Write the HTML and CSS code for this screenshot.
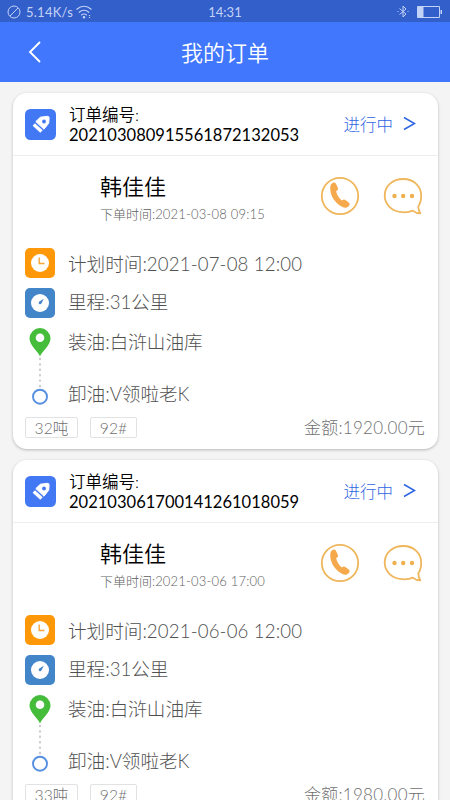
FILE: index.html
```html
<!DOCTYPE html>
<html lang="zh-CN">
<head>
<meta charset="utf-8">
<title>我的订单</title>
<link rel="stylesheet" href="styles.css">
</head>
<body>
<svg class="defs" aria-hidden="true">
  <symbol id="tag" viewBox="0 0 31 31">
    <rect width="31" height="31" rx="5.5" fill="#4278f4"/>
    <path d="M10.8 12.6 15.4 8.2 22.6 7.3Q24.1 7.300 24.1 8.900L23.7 14.2 19 20.2Z" fill="#fff" stroke="#fff" stroke-linejoin="round"/>
    <path d="M8.800 15.400 16.500 22.600" stroke="#fff" stroke-width="3.400"/>
    <circle cx="19" cy="12.500" r="1.900" fill="#4278f4"/>
  </symbol>
  <symbol id="phone" viewBox="0 0 40 40">
    <circle cx="20" cy="20" r="18.2" fill="none" stroke="#efb65c" stroke-width="1.8"/>
    <path d="M12.4 7c1.6-1.1 3-.5 3.8 1.2l1.6 3.6c.7 1.6 0 2.4-1.7 3.3.7 3.7 2.8 7 5.7 9.5 1.6-1.3 2.5-1.4 3.9-.4l3 2.2c1.3 1 1.2 2.2.1 3.6-1.3 1.7-3.7 2.2-5.8 1.3-7.5-3.4-12.7-11-12.8-19 0-2.300.600-4.200 2.200-5.300Z" fill="#f6a84c"/>
  </symbol>
  <symbol id="chat" viewBox="0 0 40 40">
    <path d="M29.8 34.6C26 36.3 22.8 36.5 19.5 36.2 9 35.8 1.7 28.6 1.7 19.6 1.7 9.9 9.8 3 20.3 3S38.2 10.3 38.2 19.6c0 4.800-.5 7.600-2.900 10.600.1 3 .6 5.300 2.100 7.200-3 .1-5.300-.8-7.600-2.800Z" fill="none" stroke="#efb65c" stroke-width="1.8" stroke-linejoin="round"/>
    <g fill="#efb050"><circle cx="11.5" cy="20" r="2.2"/><circle cx="20.2" cy="20" r="2.2"/><circle cx="29" cy="20" r="2.2"/></g>
  </symbol>
  <symbol id="clock" viewBox="0 0 30 30">
    <rect width="30" height="30" rx="5" fill="#ff9808"/>
    <circle cx="15" cy="15" r="9" fill="#fff"/>
    <path d="M14.2 9.5V15.5H19.5" fill="none" stroke="#f8a537" stroke-width="1.4"/>
  </symbol>
  <symbol id="gauge" viewBox="0 0 30 30">
    <rect width="30" height="30" rx="5" fill="#4285c9"/>
    <circle cx="15" cy="15" r="9" fill="#fff"/>
    <path d="M18.8 10.8 16.4 15.6A1.5 1.5 0 0 1 14 13.8Z" fill="#4285c9"/>
  </symbol>
  <symbol id="route" viewBox="0 0 30 84">
    <path d="M15 28.5C13.2 23.8 4.5 17.6 4.5 10.6a10.5 10.5 0 0 1 21 0C25.5 17.6 16.8 23.8 15 28.5Z" fill="#45bd3b"/>
    <circle cx="15" cy="9.8" r="4.3" fill="#fff"/>
    <path d="M15 31V60" stroke="#ccc" stroke-width="2.4" stroke-linecap="round" stroke-dasharray="0 5.4"/>
    <circle cx="15" cy="68.7" r="7" fill="#fff" stroke="#578fe0" stroke-width="1.9"/>
  </symbol>
</svg>

<div class="status">
  <div class="status-left">
    <svg width="14" height="14" viewBox="0 0 14 14" fill="none" stroke="currentColor"><circle cx="7" cy="7" r="6"/><path d="M3 11 11 3"/></svg>
    <span>5.14K/s</span>
    <svg width="16" height="14" viewBox="0 0 16 14" fill="none" stroke="currentColor" stroke-width="1.2"><path d="M.5 4.500Q8-2 15.500 4.500M2.800 7.500Q8 3 13.200 7.500M5.200 10.200Q8 7.800 10.800 10.200"/><circle cx="8" cy="12.200" r=".7" fill="currentColor"/><path d="M13.500 10v3" stroke-dasharray="1 1"/></svg>
  </div>
  <time>14:31</time>
  <div class="status-right">
    <svg width="12" height="13" viewBox="0 0 12 13" fill="none" stroke="currentColor"><path d="M2.500 3.500 9 9 6 12V1L9 4 2.500 9.500M.5 6.500h1M10.500 6.500h1"/></svg>
    <svg width="26" height="12" viewBox="0 0 26 12"><path d="M.5.500H22.500V11.500H.5Z" fill="none" stroke="currentColor"/><path d="M1 1H6.500V11H1ZM23.500 4H25V8H23.500Z" fill="currentColor"/></svg>
  </div>
</div>
<header class="nav">
  <svg class="back" width="14" height="22" viewBox="0 0 14 22" fill="none" stroke="#fff" stroke-width="1.900"><path d="M12 1 2 11 12 21"/></svg>
  <h1>我的订单</h1>
</header>

<main class="orders">
  <article class="card">
    <div class="card-head">
      <svg class="tag-icon"><use href="#tag"/></svg>
      <div class="order-no">订单编号:<br><span class="number">202103080915561872132053</span></div>
      <div class="state">进行中<svg width="13" height="15" viewBox="0 0 13 15" fill="none" stroke="currentColor" stroke-width="1.600"><path d="M1 1.500 11.500 7.500 1 13.500"/></svg></div>
    </div>
    <div class="person">
      <div class="who"><h2>韩佳佳</h2><p>下单时间:<span class="placed">2021-03-08 09:15</span></p></div>
      <svg class="round"><use href="#phone"/></svg>
      <svg class="round"><use href="#chat"/></svg>
    </div>
    <div class="line"><svg class="mini"><use href="#clock"/></svg><p>计划时间:<span class="date">2021-07-08 12:00</span></p></div>
    <div class="line mileage"><svg class="mini"><use href="#gauge"/></svg><p>里程:31公里</p></div>
    <div class="route">
      <svg class="track"><use href="#route"/></svg>
      <div class="stops"><p>装油:白浒山油库</p><p>卸油:V领啦老K</p></div>
    </div>
    <div class="foot"><span class="chip">32吨</span><span class="chip small">92#</span><span class="amount">金额:1920.00元</span></div>
  </article>

  <article class="card">
    <div class="card-head">
      <svg class="tag-icon"><use href="#tag"/></svg>
      <div class="order-no">订单编号:<br><span class="number">202103061700141261018059</span></div>
      <div class="state">进行中<svg width="13" height="15" viewBox="0 0 13 15" fill="none" stroke="currentColor" stroke-width="1.600"><path d="M1 1.500 11.500 7.500 1 13.500"/></svg></div>
    </div>
    <div class="person">
      <div class="who"><h2>韩佳佳</h2><p>下单时间:<span class="placed">2021-03-06 17:00</span></p></div>
      <svg class="round"><use href="#phone"/></svg>
      <svg class="round"><use href="#chat"/></svg>
    </div>
    <div class="line"><svg class="mini"><use href="#clock"/></svg><p>计划时间:<span class="date">2021-06-06 12:00</span></p></div>
    <div class="line mileage"><svg class="mini"><use href="#gauge"/></svg><p>里程:31公里</p></div>
    <div class="route">
      <svg class="track"><use href="#route"/></svg>
      <div class="stops"><p>装油:白浒山油库</p><p>卸油:V领啦老K</p></div>
    </div>
    <div class="foot"><span class="chip">33吨</span><span class="chip small">92#</span><span class="amount">金额:1980.00元</span></div>
  </article>
</main>
</body>
</html>
```
FILE: styles.css
```css
* { box-sizing: border-box; margin: 0; padding: 0; }
body {
  height: 800px;
  overflow: hidden;
  display: flex;
  flex-direction: column;
  background: #f4f4f5;
  font-family: Lato, "Noto Sans CJK SC", sans-serif;
  font-weight: 300;
  color: #505050;
}
svg { display: block; flex: none; }
p, h1, h2, .chip, .amount, .state, .number { white-space: nowrap; }
.defs { position: absolute; width: 0; height: 0; }
.status {
  flex: none;
  height: 22px;
  padding: 1px 7px 0;
  display: grid;
  grid-template-columns: 1fr auto 1fr;
  align-items: center;
  background: #335fca;
  color: #c3d2f7;
  font-size: 13px;
  font-weight: 400;
  line-height: 20px;
}
.status-left, .status-right { display: flex; align-items: center; }
.status-left { gap: 5px; }
.status-left span { width: 46px; letter-spacing: .25px; white-space: nowrap; }
.status-left svg:last-child { margin-left: -1px; }
.status-right { justify-content: flex-end; gap: 8px; }
.nav {
  flex: none;
  height: 60px;
  padding: 2px 28px 0;
  display: grid;
  grid-template-columns: 1fr auto 1fr;
  align-items: center;
  background: #4177fd;
  color: #fff;
}
.back { margin-top: -2px; }
.nav h1 { font-size: 22px; font-weight: 350; line-height: 30px; }
.orders { padding: 11px 12px 0 13px; display: flex; flex-direction: column; gap: 11px; }
.card {
  flex: none;
  height: 356px;
  border-radius: 14px;
  background: #fff;
  box-shadow: 0 1px 3px rgba(0, 0, 0, .25);
}
.card-head {
  height: 63px;
  padding: 0 22px 0 12px;
  display: flex;
  align-items: center;
  border-bottom: 1px solid #eee;
  color: #000;
}
.tag-icon { width: 31px; height: 31px; }
.order-no { margin: 2px 0 0 13px; font-size: 16.5px; line-height: 20px; font-weight: 350; }
.number { font-weight: 400; letter-spacing: .02px; }
.state {
  margin-left: auto;
  display: flex;
  align-items: center;
  gap: 10px;
  color: #2f66e4;
  font-size: 16.5px;
}
.state svg { margin-top: -2px; }
.person { height: 88px; padding: 0 15px 0 87px; display: flex; align-items: flex-start; }
.who { flex: 1; padding-top: 17px; }
.who h2 { color: #000; font-size: 22px; font-weight: 350; line-height: 28px; }
.who p { margin-top: 3px; color: #606060; font-size: 13px; line-height: 20px; }
.placed { letter-spacing: .2px; }
.round { width: 40px; height: 40px; margin-top: 20px; }
.round + .round { margin-left: 23px; }
.line { height: 39px; padding-left: 12px; display: flex; align-items: center; font-size: 18.6px; }
.mini { width: 30px; height: 30px; margin-top: -1px; }
.line p { margin-left: 13px; line-height: 28px; }
.date { letter-spacing: .17px; }
.mileage { height: 40px; }
.mileage p { margin-top: -2px; }
.mileage .mini { margin-top: 0; }
.route { height: 93px; padding-left: 12px; display: flex; align-items: flex-start; font-size: 18.6px; }
.track { width: 30px; height: 84px; margin-top: 5px; }
.stops { margin-left: 13px; padding-top: 5px; }
.stops p { line-height: 28px; }
.stops p + p { margin-top: 24px; }
.foot { height: 22px; padding: 0 13px 0 12px; display: flex; align-items: center; color: #707070; }
.chip {
  width: 53px;
  height: 21px;
  border: 1px solid #e2e2e2;
  border-radius: 2px;
  font-size: 15.7px;
  line-height: 20px;
  text-align: center;
}
.chip.small { width: 47px; margin-left: 12px; }
.amount { margin: 2px 0 0 auto; font-size: 17px; letter-spacing: .25px; line-height: 22px; }
```
